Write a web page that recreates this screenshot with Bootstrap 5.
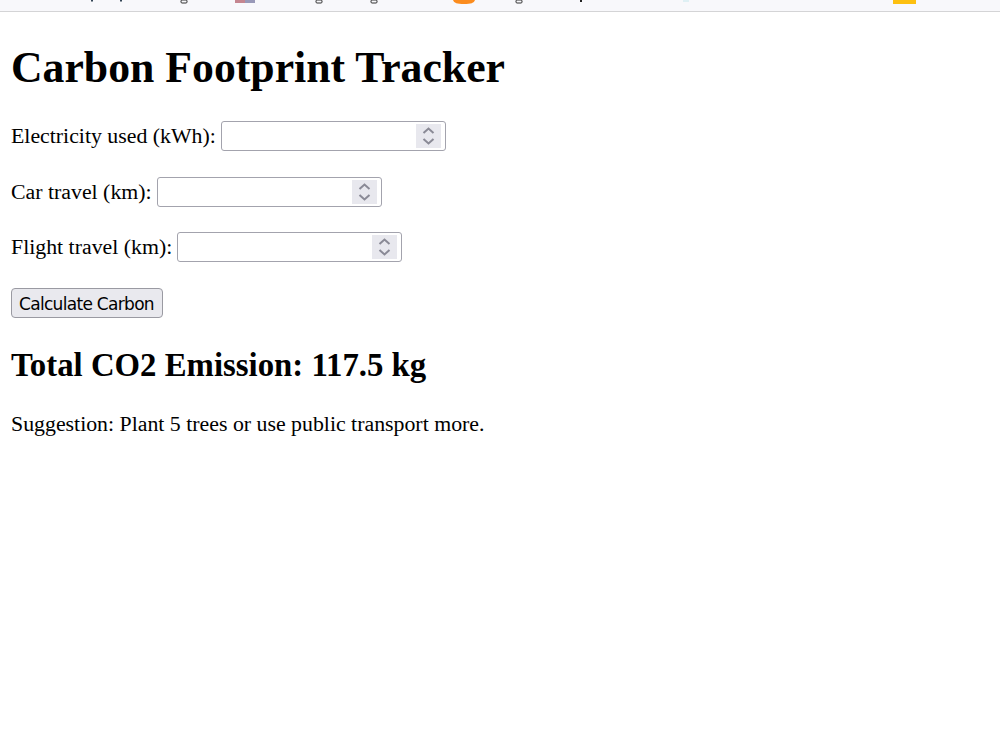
<!DOCTYPE html>
<html lang="en">
<head>
<meta charset="utf-8">
<title>Carbon Footprint Tracker</title>
<link href="https://cdn.jsdelivr.net/npm/bootstrap@5.3.0/dist/css/bootstrap.min.css" rel="stylesheet">
<style>
body{font-family:"Liberation Serif","Times New Roman",serif;font-size:21.84px;line-height:28px;color:#000;background:#fff}
.topstrip{height:12px;background:#f8f8fb;border-bottom:1px solid #d4d4d6}
.topstrip svg{display:block}
.pagebody{padding:0 11px}
.pagetitle{font-family:inherit;font-size:43.74px;font-weight:700;line-height:48px;margin:31px 0 31px}
.fieldrow{margin-bottom:27.5px;height:28px;gap:5px}
.fieldrow label{white-space:nowrap}
.numbox{position:relative;width:225px;height:30px}
.numbox input{display:block;width:100%;height:100%;border:1px solid #a3a3ad;border-radius:3px;background:#fff;padding:0 4px;outline:0}
.spinbox{position:absolute;right:5px;top:3px;width:25px;height:24px;background:#e8e8ee}
.spinbox svg{display:block}
.calcbtn{font-family:"DejaVu Sans",Tahoma,sans-serif;font-size:17px;line-height:20px;height:30px;width:152px;padding:2px 1px 0 0;margin-top:-1px;border:1px solid #9a9aa2;border-radius:4px;background:#e9e9ee;color:#000;display:block;white-space:nowrap;letter-spacing:-.7px}
.totalline{font-family:inherit;font-size:32.8px;font-weight:700;line-height:36px;margin:29.75px 0 27px}
.hintline{margin:0}
</style>
</head>
<body>
<div class="topstrip">
<svg width="1000" height="11" viewBox="0 0 1000 11" aria-hidden="true">
<rect x="91" y="0" width="2" height="1.5" fill="#345"/>
<rect x="120" y="0" width="2" height="1.5" fill="#345"/>
<rect x="181" y="0" width="6" height="3" rx="1" fill="none" stroke="#333"/>
<rect x="235" y="0" width="10" height="3" fill="#a33a4a" opacity=".6"/><rect x="245" y="0" width="10" height="3" fill="#5a5a8c" opacity=".6"/>
<rect x="316" y="0" width="6" height="3" rx="1" fill="none" stroke="#333"/>
<rect x="371" y="0" width="6" height="3" rx="1" fill="none" stroke="#333"/>
<path d="M453 0h22c-1 3-4 4-11 4s-10-1-11-4z" fill="#fb8c1e"/>
<rect x="516" y="0" width="6" height="3" rx="1" fill="none" stroke="#333"/>
<rect x="580" y="0" width="2" height="2" fill="#222"/>
<rect x="683" y="0" width="6" height="2" fill="#dff0f4"/>
<rect x="893" y="0" width="23" height="4" fill="#fdc010"/>
</svg>
</div>
<main class="pagebody">
<h1 class="pagetitle">Carbon Footprint Tracker</h1>
<div class="fieldrow d-flex align-items-center"><label for="a">Electricity used (kWh):</label><span class="numbox"><input id="a" type="text"><span class="spinbox"><svg width="25" height="24" viewBox="0 0 25 24" fill="none" stroke="#8a8a96" stroke-width="2"><path d="M7.500 9l5-4.500 5 4.500M7.500 15l5 4.500 5-4.500"/></svg></span></span></div>
<div class="fieldrow d-flex align-items-center"><label for="b">Car travel (km):</label><span class="numbox"><input id="b" type="text"><span class="spinbox"><svg width="25" height="24" viewBox="0 0 25 24" fill="none" stroke="#8a8a96" stroke-width="2"><path d="M7.500 9l5-4.500 5 4.500M7.500 15l5 4.500 5-4.500"/></svg></span></span></div>
<div class="fieldrow d-flex align-items-center"><label for="c">Flight travel (km):</label><span class="numbox"><input id="c" type="text"><span class="spinbox"><svg width="25" height="24" viewBox="0 0 25 24" fill="none" stroke="#8a8a96" stroke-width="2"><path d="M7.500 9l5-4.500 5 4.500M7.500 15l5 4.500 5-4.500"/></svg></span></span></div>
<button class="calcbtn" type="button">Calculate Carbon</button>
<h2 class="totalline">Total CO2 Emission: 117.5 kg</h2>
<p class="hintline">Suggestion: Plant 5 trees or use public transport more.</p>
</main>
<script src="https://cdn.jsdelivr.net/npm/bootstrap@5.3.0/dist/js/bootstrap.bundle.min.js"></script>
</body>
</html>
